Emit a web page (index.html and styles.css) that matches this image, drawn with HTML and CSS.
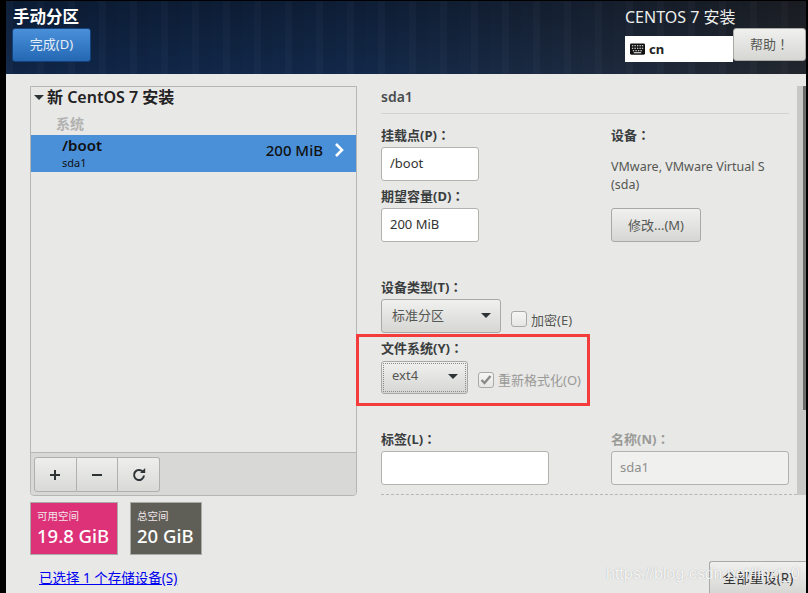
FILE: index.html
```html
<!DOCTYPE html>
<html lang="en">
  <head>
    <meta charset="UTF-8" />
    <title>手动分区</title>
    <link rel="stylesheet" href="styles.css">
  </head>
  <body>
    <div class="screen">
      <header class="topbar">
        <div class="topbar-left">
          <h1>手动分区</h1>
          <button class="done-btn">完成(D)</button>
        </div>
        <div class="topbar-right">
          <div class="product">CENTOS 7 安装</div>
          <div class="topbar-row">
            <div class="kbd-box">
              <svg width="15" height="12" viewBox="0 0 16 12">
                <rect width="16" height="12" rx="1.5" fill="#111" />
                <path d="M2 2.5h1.5M4.7 2.5h1.5M7.4 2.5h1.5M10.1 2.5h1.5M12.6 2.5h1.5M2 5.2h1.5M4.7 5.2h1.5M7.4 5.2h1.5M10.1 5.2h1.5M12.6 5.2h1.5M3 7.9h1.5M5.7 7.9h1.5M8.4 7.9h1.5M11.1 7.9h1.5M4 10h8" stroke="#fff" stroke-width="1.1" fill="none" />
              </svg>
              <b>cn</b>
            </div>
            <button class="btn help-btn">帮助<span class="colon">！</span></button>
          </div>
        </div>
      </header>

      <main class="content">
        <section class="left">
          <div class="panel">
            <div class="tree-title"><span class="tri"></span>新 CentOS 7 安装</div>
            <div class="tree-group">系统</div>
            <div class="mount-row">
              <div class="mount-names">
                <div class="mount-name">/boot</div>
                <div class="mount-dev">sda1</div>
              </div>
              <div class="mount-size">200 MiB</div>
              <svg class="chev" width="10" height="16" viewBox="0 0 10 16">
                <path d="M2 2l6 6-6 6" stroke="#fff" stroke-width="2.6" fill="none" />
              </svg>
            </div>
            <div class="panel-fill"></div>
            <div class="toolbar">
              <div class="tool-group">
                <button class="tool">
                  <svg width="12" height="12" viewBox="0 0 12 12"><path d="M6 1v10M1 6h10" stroke="#2e3436" stroke-width="2" /></svg>
                </button>
                <button class="tool">
                  <svg width="12" height="12" viewBox="0 0 12 12"><path d="M1 6h10" stroke="#2e3436" stroke-width="2" /></svg>
                </button>
                <button class="tool">
                  <svg width="14" height="14" viewBox="0 0 14 14">
                    <path d="M11.2 4.2A5 5 0 1 0 12 7.5" stroke="#2e3436" stroke-width="2" fill="none" />
                    <path d="M8 5h5.2V0z" fill="#2e3436" />
                  </svg>
                </button>
              </div>
            </div>
          </div>
          <div class="tiles">
            <div class="tile tile-free">
              <div class="tile-label">可用空间</div>
              <div class="tile-value">19.8 GiB</div>
            </div>
            <div class="tile tile-total">
              <div class="tile-label">总空间</div>
              <div class="tile-value">20 GiB</div>
            </div>
          </div>
          <a class="device-link" href="#">已选择 1 个存储设备(S)</a>
        </section>

        <section class="right">
          <div class="right-top">
            <div class="form">
              <h2 class="part-name">sda1</h2>
              <div class="form-cols">
                <div class="col-a">
                  <label class="lbl">挂载点(P)<span class="colon">：</span></label>
                  <input class="field field-short" type="text" value="/boot">
                  <label class="lbl lbl-next">期望容量(D)<span class="colon">：</span></label>
                  <input class="field field-short" type="text" value="200 MiB">
                </div>
                <div class="col-b">
                  <label class="lbl">设备<span class="colon">：</span></label>
                  <p class="dev-text">VMware, VMware Virtual S<br>(sda)</p>
                  <button class="btn modify-btn">修改...(M)</button>
                </div>
              </div>
              <label class="lbl lbl-type">设备类型(T)<span class="colon">：</span></label>
              <div class="combo-row">
                <div class="btn combo combo-type"><span>标准分区</span><i class="tri"></i></div>
                <span class="check"></span>
                <span class="check-text">加密(E)</span>
              </div>
              <label class="lbl lbl-fs">文件系统(Y)<span class="colon">：</span></label>
              <div class="combo-row combo-row-fs">
                <div class="btn combo combo-fs"><span>ext4</span><i class="tri"></i></div>
                <span class="check check-on">
                  <svg width="12" height="10" viewBox="0 0 12 10"><path d="M1.5 5l3 3 6-7" stroke="#8a8a88" stroke-width="2.4" fill="none" /></svg>
                </span>
                <span class="check-text check-dim">重新格式化(O)</span>
              </div>
              <div class="form-cols form-cols-tag">
                <div class="col-a">
                  <label class="lbl">标签(L)<span class="colon">：</span></label>
                  <input class="field field-tag" type="text">
                </div>
                <div class="col-b">
                  <label class="lbl lbl-off">名称(N)<span class="colon">：</span></label>
                  <input class="field field-name" type="text" value="sda1" disabled>
                </div>
              </div>
            </div>
            <div class="scroll"><div class="thumb"></div></div>
          </div>
          <div class="right-foot">
            <button class="btn reset-btn">全部重设(R)</button>
          </div>
        </section>
      </main>

      <div class="red-box"></div>
      <div class="watermark">https://blog.csdn.net/linxt_0</div>
    </div>
  </body>
</html>
```
FILE: styles.css
```css
/* page */
html, body {
  margin: 0;
  height: 100%;
  overflow: hidden;
  background: #000;
}

* {
  box-sizing: border-box;
}

.screen {
  position: relative;
  width: 808px;
  height: 593px;
  padding: 1px 2px 0 6px;
  display: flex;
  flex-direction: column;
  background: #000;
  overflow: hidden;
  font-family: "Noto Sans", "Noto Sans CJK SC", sans-serif;
  font-size: 13px;
  color: #2e3436;
}

/* the fullwidth marks sit centred in the original */
.colon {
  font-family: "Noto Sans CJK TC", sans-serif;
}

/* top bar */
.topbar {
  height: 73px;
  flex: none;
  display: flex;
  justify-content: space-between;
  background:
    repeating-linear-gradient(90deg, rgba(255, 255, 255, 0.018) 0 7px, rgba(0, 0, 0, 0.03) 7px 19px, rgba(255, 255, 255, 0) 19px 31px),
    linear-gradient(rgba(0, 0, 0, 0.28), rgba(0, 0, 0, 0)),
    linear-gradient(90deg, #0f2648 0%, #13294a 45%, #1c2a40 72%, #23272e 100%);
}

.topbar-left {
  padding: 5px 0 0 6px;
}

h1 {
  margin: 0;
  height: 22px;
  padding-left: 1px;
  font-size: 16.5px;
  line-height: 21px;
  font-weight: 700;
  color: #fff;
}

.done-btn {
  display: block;
  width: 79px;
  height: 34px;
  padding: 0 0 3px;
  border: 1px solid #15427a;
  border-radius: 3px;
  background: linear-gradient(#4a90d9, #2468b4);
  color: #e6eef7;
  font: inherit;
  font-size: 13px;
}

.topbar-right {
  width: 181px;
  padding-top: 5px;
}

.product {
  height: 22px;
  line-height: 22px;
  font-size: 16px;
  color: #eeeeec;
}

.topbar-row {
  display: flex;
  align-items: flex-start;
}

.kbd-box {
  width: 108px;
  height: 26px;
  margin-top: 8px;
  padding-left: 5px;
  display: flex;
  align-items: center;
  gap: 4px;
  background: #fff;
  font-size: 13px;
  color: #222;
}

.btn {
  border: 1px solid #a9a9a6;
  border-radius: 3px;
  background: linear-gradient(#f0f0ef, #d6d6d3);
  color: #555753;
  font: inherit;
  padding: 0;
}

.help-btn {
  width: 73px;
  height: 33px;
  padding-bottom: 3px;
  font-size: 13px;
}

/* body */
.content {
  flex: 1;
  display: flex;
  padding: 12px 0 0 24px;
  background: #e8e8e7;
}

.left {
  width: 327px;
  flex: none;
}

.panel {
  height: 410px;
  display: flex;
  flex-direction: column;
  border: 1px solid #b6b6b3;
  border-radius: 0 0 4px 4px;
}

.tree-title {
  height: 20px;
  padding-left: 3px;
  display: flex;
  align-items: center;
  font-size: 16px;
  line-height: 20px;
  font-weight: 600;
  color: #222;
}

.tri {
  display: inline-block;
  width: 0;
  height: 0;
  border-left: 5px solid transparent;
  border-right: 5px solid transparent;
  border-top: 5px solid #2e3436;
}

.tree-title .tri {
  margin-right: 3px;
}

.tree-group {
  height: 28px;
  padding: 6px 0 0 25px;
  font-size: 14px;
  line-height: 21px;
  font-weight: 700;
  color: #b2b2b0;
}

.mount-row {
  height: 37px;
  flex: none;
  display: flex;
  align-items: center;
  padding-left: 31px;
  background: #4a90d9;
  color: #111;
}

.mount-names {
  flex: 1;
  margin-top: -1px;
}

.mount-name {
  font-size: 15px;
  line-height: 18px;
  font-weight: 600;
}

.mount-dev {
  font-size: 11px;
  line-height: 17px;
}

.mount-size {
  margin-bottom: 8px;
  font-size: 15px;
  font-weight: 500;
}

.chev {
  margin: 0 12px 8px 11px;
}

.panel-fill {
  flex: 1;
}

.toolbar {
  height: 43px;
  flex: none;
  padding: 4px 0 0 3px;
  border-top: 1px solid #b6b6b3;
  background: #d8d8d6;
  border-radius: 0 0 4px 4px;
}

.tool-group {
  display: flex;
  width: 126px;
  height: 35px;
}

.tool {
  flex: 1;
  display: flex;
  align-items: center;
  justify-content: center;
  padding: 0;
  border: 1px solid #b0b0ad;
  border-left-width: 0;
  background: linear-gradient(#eeeeed, #d9d9d6);
}

.tool:first-child {
  border-left-width: 1px;
  border-radius: 3px 0 0 3px;
}

.tool:last-child {
  border-radius: 0 3px 3px 0;
}

.tiles {
  display: flex;
  gap: 12px;
  margin-top: 6px;
}

.tile {
  height: 53px;
  padding: 5px 6px 0;
  border: 1px solid #aaaaa6;
  color: #fff;
}

.tile-free {
  width: 88px;
  background: #dd3278;
}

.tile-total {
  width: 72px;
  background: #5f5f58;
}

.tile-label {
  font-size: 10.5px;
  line-height: 17px;
  color: #f2e6ea;
}

.tile-value {
  font-size: 18.5px;
  line-height: 21px;
  font-weight: 500;
  white-space: nowrap;
}

.device-link {
  display: block;
  margin: 14px 0 0 9px;
  font-size: 13.5px;
  line-height: 18px;
  color: #0000ee;
}

/* right side */
.right {
  flex: 1;
  margin-left: 24px;
  display: flex;
  flex-direction: column;
}

.right-top {
  display: flex;
  height: 409px;
  flex: none;
}

.form {
  width: 416px;
  border-bottom: 1px dashed #b6b6b3;
}

.part-name {
  margin: 0 8px 0 0;
  height: 28px;
  font-size: 14px;
  line-height: 22px;
  font-weight: 600;
  color: #4a4d4e;
  border-bottom: 1px solid #d2d2d0;
}

.form-cols {
  display: flex;
  padding-top: 11px;
}

.col-a {
  width: 230px;
  flex: none;
}

.col-b {
  flex: 1;
}

.lbl {
  display: block;
  height: 20px;
  margin-bottom: 2px;
  font-size: 13px;
  line-height: 20px;
  font-weight: 700;
  color: #3a3d3e;
}

.lbl-next {
  margin-top: 5px;
  margin-bottom: 2px;
}

.field {
  display: block;
  height: 34px;
  padding: 0 8px 2px;
  border: 1px solid #b2b2af;
  border-radius: 3px;
  background: #fff;
  color: #333;
  font: inherit;
  font-size: 13px;
}

.field-short {
  width: 98px;
}

.field-tag {
  width: 168px;
}

.field-name {
  width: 178px;
  background: #f0f0ef;
  color: #8e8f8c;
}

.dev-text {
  margin: 13px 0 14px;
  font-size: 12.5px;
  line-height: 18px;
  color: #555753;
}

.modify-btn {
  display: block;
  width: 90px;
  height: 34px;
  padding-bottom: 2px;
  font-size: 13px;
}

.lbl-type {
  margin-top: 35px;
}

.combo-row {
  display: flex;
  align-items: center;
  height: 34px;
}

.combo-row .check {
  margin-top: 5px;
}

.combo {
  display: flex;
  align-items: center;
  justify-content: space-between;
  height: 34px;
  padding: 0 9px 4px 10px;
  font-size: 13px;
}

.combo .tri {
  margin-top: 3px;
}

.combo-type {
  width: 120px;
}

.combo-fs {
  width: 87px;
  height: 33px;
  padding-bottom: 5px;
  outline: 1px dotted #8a8a88;
  outline-offset: -3px;
}

.check {
  width: 16px;
  height: 16px;
  margin-left: 10px;
  display: flex;
  align-items: center;
  justify-content: center;
  border: 1px solid #a9a9a6;
  border-radius: 3px;
  background: linear-gradient(#f6f6f5, #e6e6e4);
}

.check-text {
  margin: 6px 0 0 4px;
  font-size: 13px;
  color: #555753;
}

.check-dim {
  margin-top: 4px;
  color: #9a9a97;
}

.lbl-fs {
  margin-top: 5px;
  margin-bottom: 3px;
}

.combo-row-fs {
  height: 33px;
}

.form-cols-tag {
  padding-top: 35px;
}

.lbl-off {
  color: #9a9a97;
}

.scroll {
  width: 9px;
  height: 409px;
  margin-left: 0;
  background: #c8c8c6;
}

.thumb {
  width: 3px;
  height: 324px;
  margin-left: 6px;
  background: #6c6c6a;
}

.right-foot {
  display: flex;
  justify-content: flex-end;
  padding-top: 66px;
}

.reset-btn {
  width: 97px;
  height: 34px;
  padding-bottom: 3px;
  border-right: 0;
  border-radius: 3px 0 0 0;
  font-size: 13.5px;
  color: #333;
}

/* things drawn over the shot */
.red-box {
  position: absolute;
  left: 356px;
  top: 334px;
  width: 234px;
  height: 72px;
  border: 3px solid #f43c3c;
}

.watermark {
  position: absolute;
  left: 606px;
  top: 564px;
  font-family: "Liberation Sans", sans-serif;
  font-size: 16px;
  line-height: 20px;
  color: rgba(255, 255, 255, 0.9);
  white-space: nowrap;
  text-shadow: 0 0 1px rgba(120, 120, 120, 0.6);
}
```
